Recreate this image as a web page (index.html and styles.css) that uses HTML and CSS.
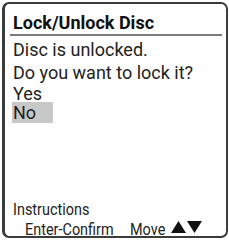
FILE: index.html
```html
<!DOCTYPE html>
<html>

<head>
    <title>Lock/Unlock Disc</title>
    <link rel="stylesheet" href="styles.css">
</head>

<body>
    <div class="screen">
        <h1 class="title">Lock/Unlock Disc</h1>
        <div class="message">
            <p>Disc is unlocked.</p>
            <p>Do you want to lock it?</p>
        </div>
        <ul class="choices">
            <li>Yes</li>
            <li class="selected">No</li>
        </ul>
        <div class="instructions">
            <p class="heading"><span class="narrow">Instructions</span></p>
            <p class="keys">
                <span class="confirm"><span class="narrow">Enter-Confirm</span></span>
                <span class="move"><span class="narrow">Move</span></span>
                <svg class="arrows" width="31" height="12" viewBox="0 0 31 12">
                    <polygon points="0,12 7.5,0 15,12" />
                    <polygon points="16,0 31,0 23.5,12" />
                </svg>
            </p>
        </div>
    </div>
</body>

</html>
```

FILE: styles.css
```css
body {
    margin: 0;
    background-color: #ffffff;
    font-family: 'Roboto', 'Liberation Sans', sans-serif;
    color: #222222;
}

.screen {
    width: 226px;
    height: 236px;
    margin: 2px 0 0 2px;
    box-sizing: border-box;
    border: 2px solid #3c3c3c;
    border-left-width: 3px;
    border-radius: 7px;
    padding: 8px 4px 0 8px;
    display: flex;
    flex-direction: column;
}

.title {
    margin: 0 0 0 -3px;
    padding: 0 0 0 3px;
    font-size: 18px;
    font-weight: bold;
    line-height: 22px;
    color: #111111;
    border-bottom: 2px solid #7c7c7c;
}

p {
    margin: 0;
}

.message {
    padding-top: 2px;
    font-size: 18px;
    line-height: 23px;
}

.choices {
    list-style: none;
    margin: 0;
    padding: 0;
    font-size: 18px;
    line-height: 20px;
}

.choices .selected {
    width: 40px;
    margin: -2px 0 0 -1px;
    padding-left: 1px;
    line-height: 21px;
    background-color: #c8c8c8;
}

.instructions {
    margin: auto 0 -3px;
    font-size: 17px;
    line-height: 20px;
    white-space: nowrap;
}

.narrow {
    display: inline-block;
    transform: scaleX(0.85);
    transform-origin: left center;
}

.keys {
    display: flex;
    align-items: center;
    padding-left: 12px;
    height: 20px;
}

.confirm {
    width: 105px;
    flex-shrink: 0;
}

.move {
    width: 41px;
    flex-shrink: 0;
}

.arrows {
    fill: #111111;
    margin-top: -5px;
}
```
